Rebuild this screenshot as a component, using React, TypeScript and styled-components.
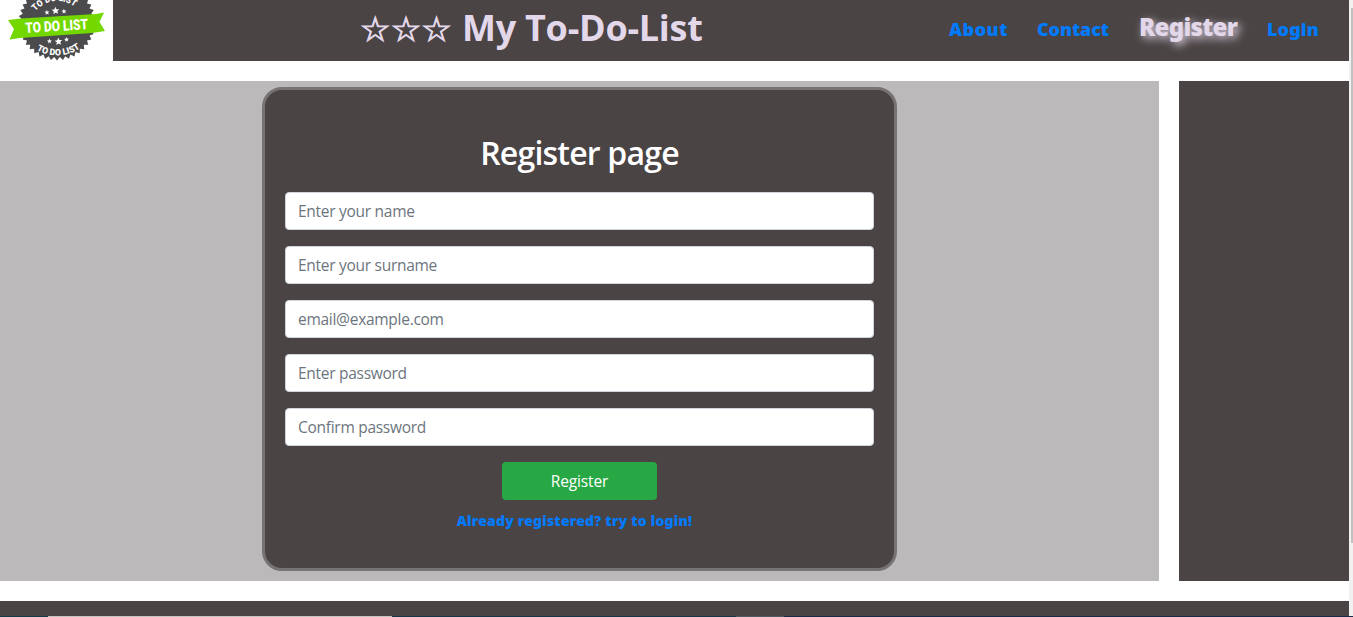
import React from "react";
import styled, { createGlobalStyle } from "styled-components";

const GlobalStyle = createGlobalStyle`
  *, *::before, *::after { box-sizing: border-box; }
  html, body { margin: 0; height: 100%; overflow: hidden; background: #fff; }
  body { font-family: "Open Sans", "Noto Sans", sans-serif; font-size: 16px; line-height: 24px; }
`;

const Screen = styled.div`
  width: 1353px;
  height: 617px;
  overflow: hidden;
  display: flex;
  flex-direction: column;
`;

const Viewport = styled.div`
  display: flex;
  height: 616px;
`;

const Page = styled.div`
  width: 1349px;
  display: flex;
  flex-direction: column;
  gap: 20px;
`;

const Header = styled.header`
  display: flex;
  align-items: flex-start;
  height: 61px;
  flex: none;
  background: #4a4444;
`;

const LogoBox = styled.div`
  width: 113px;
  height: 61px;
  background: #fff;
  overflow: hidden;
  svg { display: block; }
`;

const Title = styled.h1`
  margin: 0 0 0 247px;
  width: 346px;
  display: flex;
  align-items: baseline;
  white-space: pre;
  color: #e3d8ea;
  font-size: 36px;
  line-height: 56px;
  font-weight: 700;
`;

const Stars = styled.span`
  width: 102px;
  font-family: "DejaVu Sans", sans-serif;
  font-size: 34px;
  font-weight: 400;
  letter-spacing: 0.2px;
  -webkit-text-stroke: 1px #e3d8ea;
`;

const Name = styled.span`
  letter-spacing: -0.25px;
`;

const Nav = styled.nav`
  flex: 1;
  display: flex;
  justify-content: flex-end;
  align-items: baseline;
  gap: 30px;
  padding: 7px 30px 0 0;
  line-height: 40px;
`;

const NavLink = styled.a<{ $width: number; $active?: boolean; $track: number }>`
  width: ${(p) => p.$width}px;
  white-space: nowrap;
  font-family: "Noto Sans", "Open Sans", sans-serif;
  font-weight: 900;
  font-size: ${(p) => (p.$active ? 24 : 18)}px;
  letter-spacing: ${(p) => p.$track}px;
  color: ${(p) => (p.$active ? "#e3d8ea" : "#007bff")};
  text-shadow: ${(p) => (p.$active ? "3px 3px 8px #e3d8ea" : "none")};
`;

const Content = styled.div`
  display: flex;
  gap: 20px;
  height: 500px;
  flex: none;
`;

const Main = styled.main`
  width: 1159px;
  padding-top: 6px;
  display: flex;
  justify-content: center;
  align-items: flex-start;
  background: #bbb9ba;
`;

const Aside = styled.aside`
  flex: 1;
  background: #4a4444;
`;

const Footer = styled.footer`
  flex: 1;
  background: #4a4444;
`;

const Card = styled.form`
  width: 635px;
  height: 484px;
  padding: 43px 20px 0;
  border: 3px solid #787373;
  border-radius: 20px;
  background: #4a4444;
  display: flex;
  flex-direction: column;
  align-items: center;
`;

const Heading = styled.h2`
  margin: 0 0 20px;
  font-size: 32px;
  line-height: 39px;
  font-weight: 600;
  letter-spacing: -0.8px;
  color: #fff;
`;

const Field = styled.input`
  width: 589px;
  height: 38px;
  flex: none;
  margin: 0 0 16px;
  padding: 6px 12px;
  border: 1px solid #ced4da;
  border-radius: 4px;
  background: #fff;
  font: inherit;
  font-size: 15.5px;
  letter-spacing: -0.28px;
  &::placeholder { color: #6c757d; opacity: 1; }
`;

const Submit = styled.button`
  width: 155px;
  height: 38px;
  flex: none;
  padding: 0;
  border: 0;
  border-radius: 4px;
  background: #28a745;
  color: #fff;
  font: inherit;
  font-size: 15.5px;
  letter-spacing: -0.15px;
`;

const LoginLink = styled.a`
  margin: 9px 10px 0 0;
  font-family: "Noto Sans", "Open Sans", sans-serif;
  font-size: 14px;
  font-weight: 900;
  letter-spacing: 0.18px;
  white-space: nowrap;
  color: #007bff;
`;

const ScrollTrack = styled.div`
  width: 4px;
  background: #f1f1f1;
  padding: 8px 0 0 2px;
`;

const ScrollThumb = styled.div`
  height: 535px;
  background: #c1c1c1;
`;

const BottomEdge = styled.div`
  display: flex;
  height: 1px;
`;

const EdgePart = styled.div<{ $width: number; $color: string }>`
  width: ${(p) => p.$width}px;
  background: ${(p) => p.$color};
`;

const point = (angle: number, r: number, cx = 57, cy = 22) =>
  `${(cx + r * Math.cos(angle)).toFixed(2)},${(cy + r * Math.sin(angle)).toFixed(2)}`;

const seal = Array.from({ length: 80 }, (_, i) =>
  point((i * Math.PI) / 40 + Math.PI / 2, i % 2 ? 35.2 : 38.6)
).join(" ");

const star = (cx: number, cy: number, r: number) =>
  Array.from({ length: 10 }, (_, i) =>
    point((i * Math.PI) / 5 - Math.PI / 2 - 0.07, i % 2 ? r * 0.45 : r, cx, cy)
  ).join(" ");

const Logo = () => (
  <svg width="113" height="61" viewBox="0 0 113 61" fontFamily="Roboto, sans-serif" fontWeight="700">
    <polygon points={seal} fill="#4b4b4d" />
    <path id="upper" d="M35.5 11 A29 29 0 0 1 77 8.5" fill="none" />
    <path id="lower" d="M36.5 50 A40 40 0 0 0 82 46.5" fill="none" />
    <g fontSize="9" fontWeight="900" fill="#fff">
      <text>
        <textPath href="#upper" textLength="43" lengthAdjust="spacingAndGlyphs">TO DO LIST</textPath>
      </text>
      <text>
        <textPath href="#lower" textLength="46" lengthAdjust="spacingAndGlyphs">TO DO LIST</textPath>
      </text>
    </g>
    <g fill="#fff">
      <polygon points={star(47, 12.5, 2.6)} />
      <polygon points={star(55.5, 10.8, 4)} />
      <polygon points={star(64, 11.4, 2.6)} />
      <polygon points={star(49.5, 41.2, 2.6)} />
      <polygon points={star(58.5, 41.6, 4)} />
      <polygon points={star(66.5, 39.6, 2.6)} />
    </g>
    <polygon points="8,20 21,18.5 96,14 104,12.5 99.5,22 105,31 92,33 20,38 9.5,39.5 14,29" fill="#73d700" />
    <text
      transform="translate(25.5 33) rotate(-3.6)"
      fontSize="14.5"
      fontWeight="900"
      fill="#fff"
      textLength="63"
      lengthAdjust="spacingAndGlyphs"
    >
      TO DO LIST
    </text>
  </svg>
);

const fields = [
  { type: "text", hint: "Enter your name" },
  { type: "text", hint: "Enter your surname" },
  { type: "email", hint: "email@example.com" },
  { type: "password", hint: "Enter password" },
  { type: "password", hint: "Confirm password" },
];

export default function App() {
  return (
    <Screen>
      <GlobalStyle />
      <Viewport>
        <Page>
          <Header>
            <LogoBox><Logo /></LogoBox>
            <Title><Stars>☆☆☆</Stars><Name>My To-Do-List</Name></Title>
            <Nav>
              <NavLink $width={58} $track={0.5}>About</NavLink>
              <NavLink $width={72} $track={-0.1}>Contact</NavLink>
              <NavLink $width={98} $track={-0.7} $active>Register</NavLink>
              <NavLink $width={52} $track={0.1}>Login</NavLink>
            </Nav>
          </Header>
          <Content>
            <Main>
              <Card>
                <Heading>Register page</Heading>
                {fields.map((f) => (
                  <Field key={f.hint} type={f.type} placeholder={f.hint} />
                ))}
                <Submit type="button">Register</Submit>
                <LoginLink>Already registered? try to login!</LoginLink>
              </Card>
            </Main>
            <Aside />
          </Content>
          <Footer />
        </Page>
        <ScrollTrack><ScrollThumb /></ScrollTrack>
      </Viewport>
      <BottomEdge>
        <EdgePart $width={48} $color="#123b47" />
        <EdgePart $width={344} $color="#c3c5bf" />
        <EdgePart $width={344} $color="#173647" />
        <EdgePart $width={48} $color="#4d5c63" />
        <EdgePart $width={569} $color="#182a48" />
      </BottomEdge>
    </Screen>
  );
}
